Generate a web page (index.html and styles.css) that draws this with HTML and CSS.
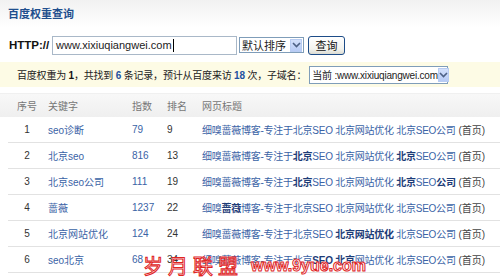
FILE: index.html
```html
<!DOCTYPE html>
<html lang="zh-CN">
<head>
  <meta charset="UTF-8" />
  <title>百度权重查询</title>
  <link rel="stylesheet" href="styles.css">
</head>
<body>
  <div class="head">
    <h1 class="title">百度权重查询</h1>
  </div>

  <div class="search">
    <label class="proto">HTTP://</label>
    <div class="field">www.xixiuqiangwei.com<span class="caret"></span></div>
    <div class="select sort">
      <span class="val">默认排序</span>
      <span class="arrow"><svg width="9" height="6" viewBox="0 0 9 6"><path d="M1 1 L4.5 4.5 L8 1" fill="none" stroke="#4d6185" stroke-width="1.6"/></svg></span>
    </div>
    <button class="btn">查询</button>
  </div>

  <div class="info">
    <span class="msg">百度权重为 <b>1</b>，共找到 <b class="hl">6</b> 条记录，预计从百度来访 <b class="hl">18</b> 次，子域名：</span>
    <div class="select sub">
      <span class="val">当前 :www.xixiuqiangwei.com</span>
      <span class="arrow"><svg width="9" height="6" viewBox="0 0 9 6"><path d="M1 1 L4.5 4.5 L8 1" fill="none" stroke="#4d6185" stroke-width="1.6"/></svg></span>
    </div>
  </div>

  <div class="table">
    <div class="row th">
      <span class="num">序号</span><span>关键字</span><span>指数</span><span>排名</span><span>网页标题</span>
    </div>
    <div class="row">
      <span class="num">1</span><a class="kw">seo诊断</a><a class="idx">79</a><span>9</span>
      <span><a class="t">细嗅蔷薇博客-专注于北京SEO 北京网站优化 北京SEO公司</a> <span class="home">(首页)</span></span>
    </div>
    <div class="row">
      <span class="num">2</span><a class="kw">北京seo</a><a class="idx">816</a><span>13</span>
      <span><a class="t">细嗅蔷薇博客-专注于<b>北京</b>SEO 北京网站优化 <b>北京</b>SEO公司</a> <span class="home">(首页)</span></span>
    </div>
    <div class="row">
      <span class="num">3</span><a class="kw">北京seo公司</a><a class="idx">111</a><span>19</span>
      <span><a class="t">细嗅蔷薇博客-专注于<b>北京</b>SEO 北京网站优化 <b>北京</b>SEO<b>公司</b></a> <span class="home">(首页)</span></span>
    </div>
    <div class="row">
      <span class="num">4</span><a class="kw">蔷薇</a><a class="idx">1237</a><span>22</span>
      <span><a class="t">细嗅<b>蔷薇</b>博客-专注于北京SEO 北京网站优化 北京SEO公司</a> <span class="home">(首页)</span></span>
    </div>
    <div class="row">
      <span class="num">5</span><a class="kw">北京网站优化</a><a class="idx">124</a><span>24</span>
      <span><a class="t">细嗅蔷薇博客-专注于北京SEO <b>北京网站优化</b> 北京SEO公司</a> <span class="home">(首页)</span></span>
    </div>
    <div class="row">
      <span class="num">6</span><a class="kw">seo北京</a><a class="idx">68</a><span>34</span>
      <span><a class="t">细嗅蔷薇博客-专注于北京<b>SEO</b> <b>北京</b>网站优化 北京SEO公司</a> <span class="home">(首页)</span></span>
    </div>
  </div>

  <div class="watermark">
    <span class="wm-cn">岁月联盟</span>
    <span class="wm-en">www.9yue.com</span>
  </div>
</body>
</html>
```

FILE: styles.css
```css
body {
  margin: 0;
  font-family: 'Liberation Sans', 'Noto Sans CJK SC', sans-serif;
  font-size: 10px;
  color: #333;
  background: #fff;
  position: relative;
  height: 279px;
  overflow: hidden;
}
.head {
  height: 28px;
  background: linear-gradient(#f1f1f1, #fff);
  padding-left: 8px;
}
.title {
  margin: 0;
  font-size: 11px;
  line-height: 28px;
  color: #1f4f8e;
  font-weight: bold;
}
.search {
  display: flex;
  align-items: center;
  height: 20px;
  margin-top: 7px;
  padding-left: 9px;
}
.proto {
  font-size: 11.5px;
  font-weight: bold;
  color: #111;
  width: 43px;
}
.field {
  width: 180px;
  height: 17px;
  border: 1px solid #a9b8c8;
  padding-left: 3px;
  font-size: 11px;
  line-height: 17px;
  color: #222;
  display: flex;
  align-items: center;
}
.caret {
  display: inline-block;
  width: 1px;
  height: 13px;
  background: #000;
  margin-left: 1px;
}
.select {
  display: flex;
  flex-shrink: 0;
  align-items: center;
  justify-content: space-between;
  height: 16px;
  border: 1px solid #7f9db9;
  background: #fff;
  font-size: 11px;
  color: #222;
  padding: 0 1px 0 2px;
  box-sizing: border-box;
  white-space: nowrap;
}
.arrow {
  width: 12px;
  height: 13px;
  background: linear-gradient(#d3e0fb, #b7cbf5);
  border: 1px solid #b8ccf2;
  box-sizing: border-box;
  display: flex;
  align-items: center;
  justify-content: center;
}
.sort {
  width: 65px;
  margin-left: 2px;
}
.btn {
  margin-left: 4px;
  width: 37px;
  height: 19px;
  padding: 0;
  border: 1px solid #1d4c88;
  border-radius: 3px;
  background: linear-gradient(#ffffff, #f3f3ee 70%, #dcdcd2);
  font-family: inherit;
  font-size: 11px;
  color: #111;
}
.info {
  display: flex;
  align-items: center;
  height: 25px;
  margin-top: 7px;
  background: #fdfbe5;
  padding-left: 17px;
  color: #222;
}
.msg {
  white-space: nowrap;
  letter-spacing: -0.2px;
}
.info b {
  color: #111;
}
.info .hl {
  color: #2450a0;
}
.sub {
  width: 139px;
  height: 18px;
  margin-left: 3px;
  font-size: 10px;
  border-color: #7f9db9;
}
.sub .val {
  letter-spacing: -0.2px;
}
.sub .arrow {
  width: 13px;
  height: 14px;
}
.table {
  margin-top: 6px;
  padding-left: 8px;
}
.row {
  display: grid;
  grid-template-columns: 38px 84px 35px 35px 1fr;
  align-items: center;
  height: 25px;
  border-bottom: 1px solid #e2e2e2;
}
.row > * {
  padding-left: 2px;
  white-space: nowrap;
}
.row .num {
  text-align: center;
  padding-left: 0;
}
.th {
  height: 23px;
  margin-left: -8px;
  padding-left: 8px;
  background: linear-gradient(#f8f8f8, #efefef);
  border-top: 1px solid #f0f0f0;
  border-bottom: none;
  color: #777;
}
.kw, .idx, .t {
  color: #3a63a6;
  text-decoration: none;
}
.t {
  letter-spacing: -0.25px;
}
.t b {
  color: #1d3c78;
}
.home {
  color: #444;
}
.watermark {
  position: absolute;
  left: 143px;
  top: 253px;
  display: flex;
  align-items: center;
  pointer-events: none;
}
.wm-cn {
  font-family: 'Noto Sans CJK SC', sans-serif;
  font-size: 20px;
  letter-spacing: 5px;
  color: #fff;
  -webkit-text-stroke: 1px #e0251f;
  line-height: 26px;
}
.wm-en {
  font-size: 16px;
  font-weight: bold;
  color: #fff;
  -webkit-text-stroke: 1px #e0251f;
  margin-left: 8px;
}
```
